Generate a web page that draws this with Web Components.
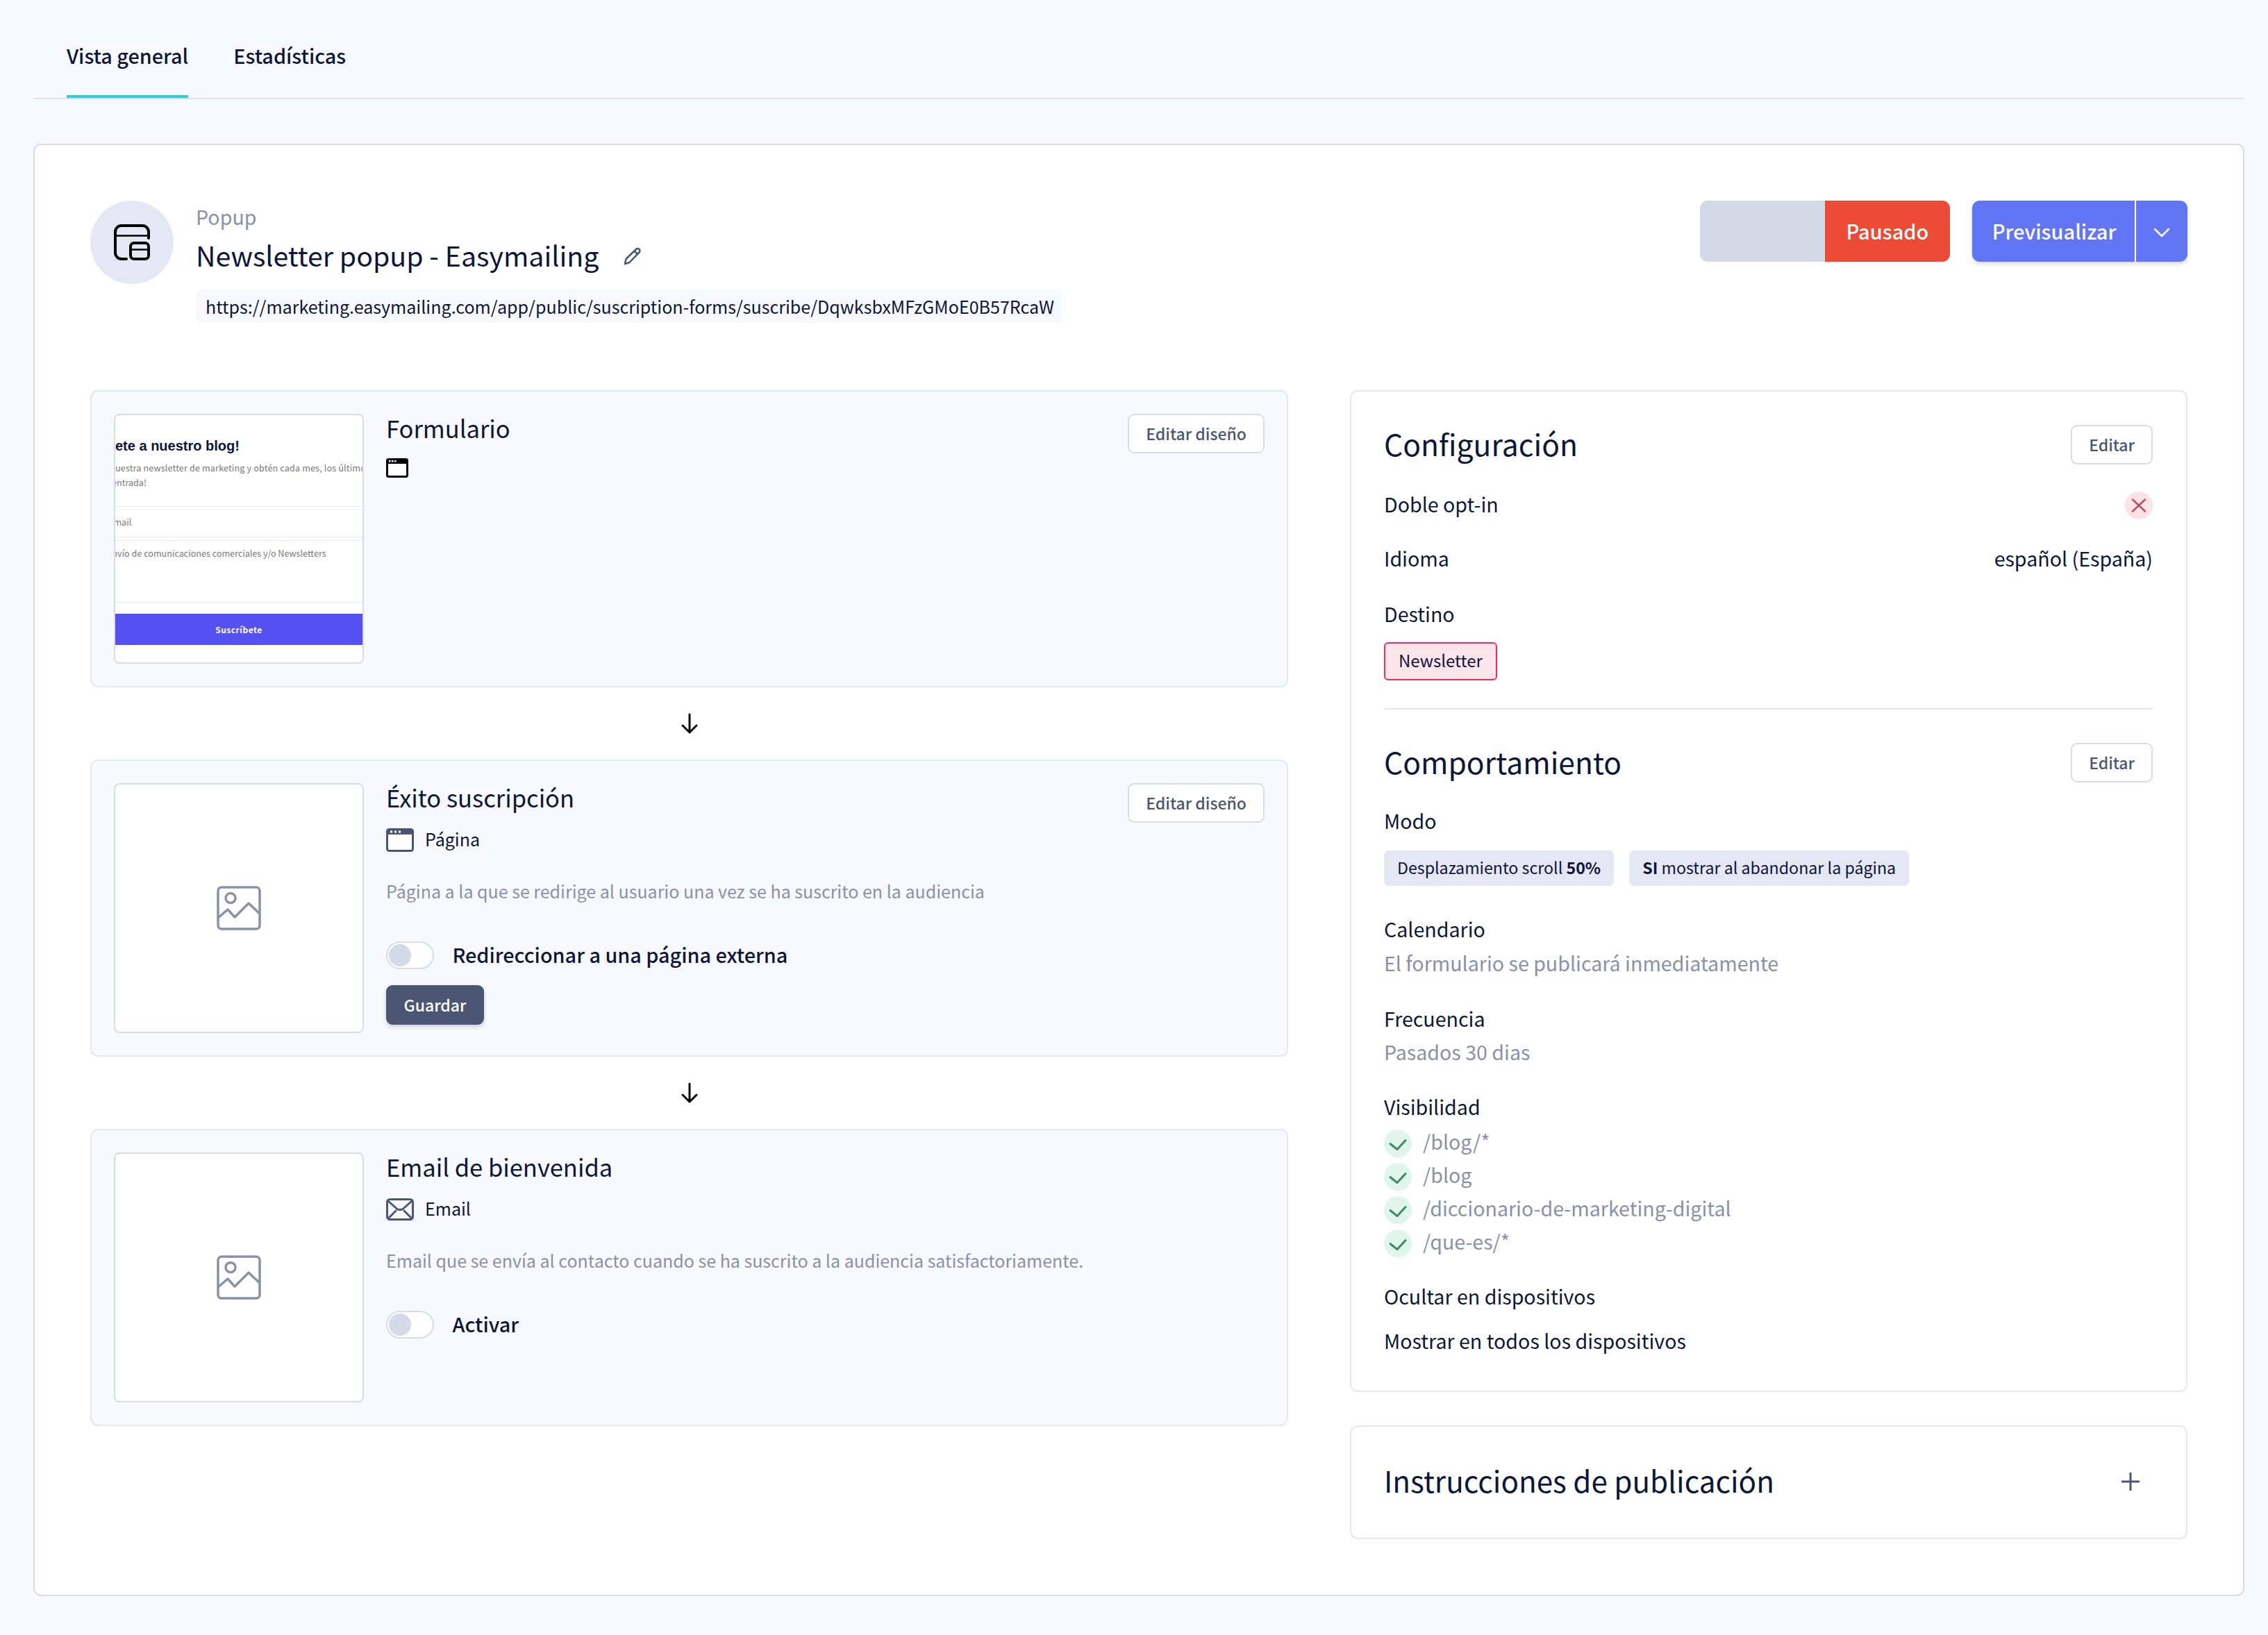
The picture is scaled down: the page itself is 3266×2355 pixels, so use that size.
<!doctype html>
<html lang="es"><head><meta charset="utf-8"><title>Newsletter popup</title>
<style>
html,body{margin:0;padding:0;background:#f8f9fe}
body{font-family:"Noto Sans CJK SC","Noto Sans",sans-serif;color:#0d1538;font-size:28.600px;line-height:40px;width:3266px;height:2355px;overflow:hidden}
</style></head><body>
<x-app></x-app>
<script>
function def(name,css,html){customElements.define(name,class extends HTMLElement{constructor(){super();this.attachShadow({mode:'open'}).innerHTML='<style>'+css+'</style>'+html;}});}

const ICONS={
 popup:'<svg width="52" height="52" viewBox="0 0 52 52" fill="none" stroke="#000" stroke-width="4" stroke-linecap="round"><path d="M50 20V11a9 9 0 0 0-9-9H11a9 9 0 0 0-9 9v30a9 9 0 0 0 9 9h7"/><path d="M2 16.500H50" stroke-width="2.500"/><rect x="24" y="27" width="26" height="23" rx="5"/><path d="M25 36.500H49" stroke-width="2.500"/></svg>',
 pencil:'<svg width="28" height="26" viewBox="0 0 28 26" fill="none" stroke="#4b5675" stroke-width="2.500" stroke-linejoin="round"><path d="M3 24l1.500-7L19 3a3 3 0 0 1 4.500 4.500L9.500 22z"/><path d="M16.500 5.500l4.500 4.500"/></svg>',
 chev:'<svg width="24" height="14" viewBox="0 0 24 14" fill="none" stroke="#fff" stroke-width="2.500" stroke-linecap="round" stroke-linejoin="round"><path d="M2 2l10 10L22 2"/></svg>',
 browserBlack:'<svg width="32" height="28" viewBox="0 0 32 28"><rect x="1.500" y="1.500" width="29" height="25" rx="2" fill="#fff" stroke="#000" stroke-width="3"/><rect x="1" y="1" width="30" height="7" fill="#000"/><g fill="#fff"><rect x="4" y="3" width="2.500" height="2.500"/><rect x="8" y="3" width="2.500" height="2.500"/><rect x="12" y="3" width="2.500" height="2.500"/></g></svg>',
 browser:'<svg width="40" height="34" viewBox="0 0 40 34"><rect x="1.500" y="1.500" width="37" height="31" rx="3" fill="#fff" stroke="#4b5675" stroke-width="3"/><path d="M1 9V4a3 3 0 0 1 3-3h32a3 3 0 0 1 3 3v5z" fill="#4b5675"/><g fill="#fff"><rect x="6" y="3.500" width="3" height="3"/><rect x="12" y="3.500" width="3" height="3"/><rect x="18" y="3.500" width="3" height="3"/></g></svg>',
 mail:'<svg width="40" height="32" viewBox="0 0 40 32" fill="none" stroke="#4b5675" stroke-width="3" stroke-linecap="round" stroke-linejoin="round"><rect x="1.500" y="1.500" width="37" height="29" rx="4"/><path d="M3 4l13 11.500q4 2 8 0L37 4"/><path d="M3 29l11-11M37 29L26 18"/></svg>',
 image:'<svg width="64" height="64" viewBox="0 0 64 64" fill="none" stroke="#8a90aa" stroke-width="3.500" stroke-linejoin="round"><rect x="2" y="2" width="60" height="60" rx="5"/><circle cx="20" cy="17.500" r="7"/><path d="M2 46l14-12 10 11 20-20 16 15"/></svg>',
 down:'<svg width="26" height="30" viewBox="0 0 26 30" fill="none" stroke="#000" stroke-width="3" stroke-linecap="round" stroke-linejoin="round"><path d="M13 2v26M3 18l10 10 10-10"/></svg>',
 x:'<svg width="22" height="20" viewBox="0 0 22 20" fill="none" stroke="#b4505f" stroke-width="2.500" stroke-linecap="round"><path d="M2 1.500l18 17M20 1.500l-18 17"/></svg>',
 check:'<svg width="26" height="16" viewBox="0 0 26 16" fill="none" stroke="#3b8a68" stroke-width="3" stroke-linecap="round" stroke-linejoin="round"><path d="M2 6.500l10 8L24 1.500"/></svg>',
 plus:'<svg width="28" height="28" viewBox="0 0 28 28" fill="none" stroke="#4b5675" stroke-width="3"><path d="M14 1v26M1 14h26"/></svg>'
};
customElements.define('x-icon',class extends HTMLElement{
  constructor(){super();this.attachShadow({mode:'open'});}
  connectedCallback(){this.shadowRoot.innerHTML='<style>:host{display:inline-flex;line-height:0;flex:none}</style>'+(ICONS[this.getAttribute('name')]||'');}
});

def('x-tab',`:host{display:flex;align-items:center;height:141px;padding-top:23px;box-sizing:border-box;border-bottom:4px solid transparent;font-size:28.800px;font-weight:500;color:#0d1538;white-space:nowrap}
:host([active]){border-bottom-color:#25d3d6}`,'<slot></slot>');
def('x-tabs',`:host{display:flex;gap:65px;height:143px;box-sizing:border-box;margin:0 34px 0 48px;padding-left:48px;border-bottom:2px solid #dfe0ec}`,'<slot></slot>');

def('x-btn',`:host{display:inline-flex;align-items:center;justify-content:center;height:57px;box-sizing:border-box;padding:0 24px 2px;border:2px solid #d8dbe8;border-radius:9px;background:#fff;color:#4b5675;font-size:23px;font-weight:500;white-space:nowrap;flex:none}
:host([dark]){background:#4b5675;border-color:#4b5675;color:#fff;box-shadow:0 3px 6px rgba(75,86,117,.25)}`,'<slot></slot>');

def('x-status',`:host{display:flex;height:88px;width:360px;border-radius:11px;overflow:hidden;font-size:29px;font-weight:500;color:#fff;flex:none}
.off{width:180px;background:#d5d8e6}.on{width:180px;box-sizing:border-box;padding-bottom:2px;background:#ec4c35;display:flex;align-items:center;justify-content:center}`,'<div class="off"></div><div class="on"><slot></slot></div>');
def('x-split',`:host{display:flex;height:88px;width:310px;border-radius:11px;overflow:hidden;background:#6275f5;color:#fff;font-size:29px;font-weight:500;box-shadow:0 3px 7px rgba(70,80,130,.22);flex:none}
.l{width:236px;box-sizing:border-box;padding:0 0 3px 2px;display:flex;align-items:center;justify-content:center;border-right:2px solid #fff}.r{flex:1;display:flex;align-items:center;justify-content:center;padding-top:4px}`,'<div class="l"><slot></slot></div><div class="r"><x-icon name="chev"></x-icon></div>');

def('x-head',`:host{display:flex;justify-content:space-between;align-items:flex-start;height:273px}
.left{display:flex;gap:32px}.circle{width:120px;height:120px;border-radius:50%;background:#e5e8f4;display:flex;align-items:center;justify-content:center}
.k{color:#8a90aa;font-size:28.600px;line-height:40px;margin-top:3px}
.t{display:flex;align-items:center;gap:35px;font-size:39.300px;line-height:56px;margin-top:7px;white-space:nowrap}
.t x-icon{margin-top:4px}
.u{display:inline-block;background:#f8f9fe;border-radius:8px;padding:0 12px 0 14px;height:49px;line-height:49px;font-size:25.050px;margin-top:22px;white-space:nowrap}
.right{display:flex;gap:32px}`,
`<div class="left"><div class="circle"><x-icon name="popup"></x-icon></div><div><div class="k"><slot name="kind"></slot></div><div class="t"><slot name="title"></slot><x-icon name="pencil"></x-icon></div><div class="u"><slot name="url"></slot></div></div></div><div class="right"><slot name="actions"></slot></div>`);

def('x-thumb',`:host{display:block;width:360px;height:360px;box-sizing:border-box;border:2px solid #d8dbe8;border-radius:8px;background:#fff;overflow:hidden;flex:none}
.ph{height:100%;display:flex;align-items:center;justify-content:center}`,'<div class="ph"><x-icon name="image"></x-icon></div>');

def('x-form-preview',`:host{display:block;width:360px;height:360px;box-sizing:border-box;border:2px solid #d8dbe8;border-radius:8px;background:#fff;overflow:hidden;flex:none;font-size:12.600px;line-height:21px;color:#777;white-space:nowrap}
.h{font:700 20px/26px "Liberation Sans",sans-serif;color:#0d1538;margin-top:31px}
.p{margin-top:8px;letter-spacing:.15px;overflow:hidden}.p2{text-indent:-5px}
.f1{margin-top:24px;height:45px;box-sizing:border-box;border-top:1px solid #e7e8ee;border-bottom:1px solid #e7e8ee;line-height:43px;text-indent:-10px}
.f2{margin-top:4px;height:90px;border-top:1px solid #e7e8ee;border-bottom:1px solid #e7e8ee;padding-top:7px;box-sizing:border-box;text-indent:-12px}
.b{margin-top:16px;height:45px;background:#5550f2;color:#fff;font-weight:700;font-size:12px;line-height:45px;text-align:center;letter-spacing:.5px}`,
`<div class="h">ete a nuestro blog!</div><div class="p">uestra newsletter de marketing y obtén cada mes, los últimos</div><div class="p2">entrada!</div><div class="f1">Email</div><div class="f2">Envío de comunicaciones comerciales y/o Newsletters</div><div class="b">Suscríbete</div>`);

def('x-toggle',`:host{display:flex;align-items:center;gap:26.500px;font-weight:500;font-size:28.800px;line-height:40px;color:#0d1538;white-space:nowrap;height:40px}
.s{width:69px;height:40px;box-sizing:border-box;border:2px solid #d8dbe8;border-radius:20px;background:#fff;padding:2px;flex:none}
.k{width:32px;height:32px;border-radius:50%;background:#d5d8e6}
.l{padding-bottom:3px}`,'<div class="s"><div class="k"></div></div><span class="l"><slot></slot></span>');

def('x-step',`:host{display:flex;gap:32px;height:428px;box-sizing:border-box;padding:32px;border:2px solid #e5e8f4;border-radius:11px;background:#f8f9fe}
.b{flex:1;min-width:0}
.top{display:flex;justify-content:space-between;align-items:flex-start;height:44px}
.t{font-size:34.500px;line-height:44px;white-space:nowrap;margin-top:-2px}
.row{margin-top:20px}`,
`<slot name="thumb"></slot><div class="b"><div class="top"><div class="t"><slot name="title"></slot></div><slot name="action"></slot></div><div class="row"><slot name="type"></slot></div><slot></slot></div>`);

def('x-desc',`:host{display:block;margin-top:33px;font-size:25px;line-height:44px;color:#8a90aa;white-space:nowrap}`,'<slot></slot>');
def('x-type',`:host{display:flex;align-items:center;gap:16px;font-size:25px;line-height:36px;height:36px;color:#0d1538}
.l{padding-bottom:4px}`,'<slot name="i"></slot><span class="l"><slot></slot></span>');
def('x-arrow',`:host{display:flex;align-items:center;justify-content:center;height:104px}`,'<x-icon name="down"></x-icon>');

def('x-card',`:host{display:block;box-sizing:border-box;border:2px solid #e5e8f4;border-radius:11px;background:#fff;padding:48px 48px 0 47px}`,'<slot></slot>');
def('x-section',`:host{display:flex;justify-content:space-between;align-items:center;height:57px}
.t{font-size:var(--section-size,42.600px);line-height:57px;white-space:nowrap;padding-bottom:4px}`,'<div class="t"><slot></slot></div><slot name="action"></slot>');
def('x-kv',`:host{display:flex;justify-content:space-between;align-items:center;height:40px;box-sizing:border-box;padding-bottom:4px;font-size:28.600px;line-height:40px;white-space:nowrap}
:host([muted]){color:#8a90aa}`,'<slot></slot><slot name="v"></slot>');
def('x-badge',`:host{display:flex;width:40px;height:40px;border-radius:50%;background:#fde2e7;align-items:center;justify-content:center;margin-top:4px}`,'<x-icon name="x"></x-icon>');
def('x-tag',`:host{display:inline-flex;align-items:center;height:55px;box-sizing:border-box;padding:0 19px 3px;border:2px solid #f02d5e;border-radius:6px;background:#fde4ea;font-size:24px;white-space:nowrap}`,'<slot></slot>');
def('x-chip',`:host{display:inline-flex;align-items:center;height:51px;box-sizing:border-box;padding:0 19px 4px;border-radius:7px;background:#e5e8f4;font-size:23.200px;white-space:nowrap}`,'<slot></slot>');
def('x-check',`:host{display:flex;align-items:center;gap:16px;height:40px;font-size:28.600px;line-height:40px;color:#8a90aa;white-space:nowrap}
.c{width:40px;height:40px;border-radius:50%;background:#e0f6ec;display:flex;align-items:center;justify-content:center;flex:none;padding-top:3px;box-sizing:border-box}
.l{padding-bottom:7px}`,'<div class="c"><x-icon name="check"></x-icon></div><span class="l"><slot></slot></span>');
def('x-rule',`:host{display:block;height:2px;background:#e6e6e9}`,'');

def('x-overview',`:host{display:grid;grid-template-columns:1725px 1206px;column-gap:89px;align-items:start}
.l,.r{display:flex;flex-direction:column}.r{gap:48px}`,
`<div class="l"><slot name="left"></slot></div><div class="r"><slot name="right"></slot></div>`);

def('x-app',`:host{display:block;height:2355px}
.main{margin:64px 34px 0 48px;height:2092px;box-sizing:border-box;border:2px solid #d8dbe8;border-radius:11px;background:#fff;padding:80px}
b{font-weight:700}`,
`<x-tabs><x-tab active>Vista general</x-tab><x-tab>Estadísticas</x-tab></x-tabs>
<div class="main">
<x-head>
  <span slot="kind">Popup</span>
  <span slot="title">Newsletter popup - Easymailing</span>
  <span slot="url">https://marketing.easymailing.com/app/public/suscription-forms/suscribe/DqwksbxMFzGMoE0B57RcaW</span>
  <x-status slot="actions">Pausado</x-status>
  <x-split slot="actions">Previsualizar</x-split>
</x-head>
<x-overview>
  <x-step slot="left">
    <x-form-preview slot="thumb"></x-form-preview>
    <span slot="title">Formulario</span>
    <x-btn slot="action">Editar diseño</x-btn>
    <x-type slot="type" style="align-items:flex-start"><x-icon slot="i" name="browserBlack"></x-icon></x-type>
  </x-step>
  <x-arrow slot="left"></x-arrow>
  <x-step slot="left">
    <x-thumb slot="thumb"></x-thumb>
    <span slot="title">Éxito suscripción</span>
    <x-btn slot="action">Editar diseño</x-btn>
    <x-type slot="type"><x-icon slot="i" name="browser"></x-icon>Página</x-type>
    <x-desc>Página a la que se redirige al usuario una vez se ha suscrito en la audiencia</x-desc>
    <x-toggle style="margin-top:51px">Redireccionar a una página externa</x-toggle>
    <x-btn dark style="margin-top:23px;display:flex;width:141px">Guardar</x-btn>
  </x-step>
  <x-arrow slot="left"></x-arrow>
  <x-step slot="left">
    <x-thumb slot="thumb"></x-thumb>
    <span slot="title">Email de bienvenida</span>
    <x-type slot="type"><x-icon slot="i" name="mail"></x-icon>Email</x-type>
    <x-desc>Email que se envía al contacto cuando se ha suscrito a la audiencia satisfactoriamente.</x-desc>
    <x-toggle style="margin-top:51px">Activar</x-toggle>
  </x-step>

  <x-card slot="right" style="height:1443px">
    <x-section>Configuración<x-btn slot="action">Editar</x-btn></x-section>
    <x-kv style="margin-top:39px">Doble opt-in<x-badge slot="v"></x-badge></x-kv>
    <x-kv style="margin-top:38px">Idioma<span slot="v">español (España)</span></x-kv>
    <x-kv style="margin-top:40px">Destino</x-kv>
    <div style="margin-top:19px;height:55px"><x-tag>Newsletter</x-tag></div>
    <x-rule style="margin-top:40px"></x-rule>
    <x-section style="margin-top:48px">Comportamiento<x-btn slot="action">Editar</x-btn></x-section>
    <x-kv style="margin-top:37px">Modo</x-kv>
    <div style="display:flex;gap:22px;margin-top:21px"><x-chip><span>Desplazamiento scroll <b>50%</b></span></x-chip><x-chip><span><b>SI</b> mostrar al abandonar la página</span></x-chip></div>
    <x-kv style="margin-top:44px">Calendario</x-kv>
    <x-kv muted style="margin-top:9px">El formulario se publicará inmediatamente</x-kv>
    <x-kv style="margin-top:40px">Frecuencia</x-kv>
    <x-kv muted style="margin-top:8px">Pasados 30 dias</x-kv>
    <x-kv style="margin-top:39px">Visibilidad</x-kv>
    <div style="display:flex;flex-direction:column;gap:8px;margin-top:11px">
      <x-check>/blog/*</x-check><x-check>/blog</x-check><x-check>/diccionario-de-marketing-digital</x-check><x-check>/que-es/*</x-check>
    </div>
    <x-kv style="margin-top:38px">Ocultar en dispositivos</x-kv>
    <x-kv style="margin-top:24px">Mostrar en todos los dispositivos</x-kv>
  </x-card>
  <x-card slot="right" style="height:164px;padding-top:50px;padding-right:66px;--section-size:42.200px">
    <x-section>Instrucciones de publicación<x-icon slot="action" name="plus"></x-icon></x-section>
  </x-card>
</x-overview>
</div>`);
</script>
</body></html>
